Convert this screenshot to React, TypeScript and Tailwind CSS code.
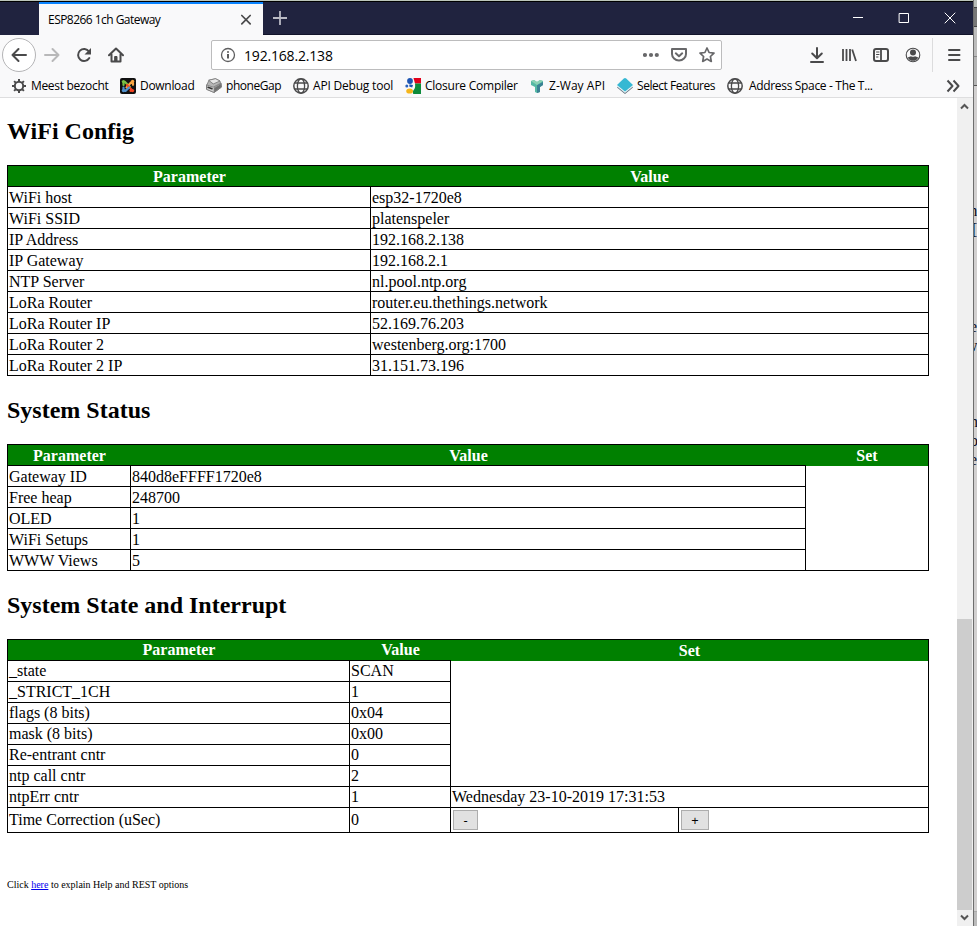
import type { ReactNode } from "react";

type IconProps = { className?: string; children: ReactNode; size?: number };

function Icon({ className = "", children, size = 16 }: IconProps) {
  return (
    <svg
      className={`block shrink-0 ${className}`}
      width={size}
      height={size}
      viewBox={`0 0 ${size} ${size}`}
      fill="none"
      stroke="#4a4a4b"
      strokeWidth="2"
      strokeLinecap="round"
      strokeLinejoin="round"
    >
      {children}
    </svg>
  );
}

function Globe() {
  return (
    <Icon>
      <g strokeWidth="1.5">
        <circle cx="8" cy="8" r="7.2" />
        <ellipse cx="8" cy="8" rx="3.6" ry="7.2" strokeWidth="1.3" />
        <path d="M2.2 5h11.6M2.2 11h11.6" strokeWidth="1.3" />
      </g>
    </Icon>
  );
}

function Gear() {
  return (
    <Icon>
      <circle cx="8" cy="8" r="4.2" strokeWidth="2" />
      <path
        d="M8 1v2.5M8 12.5V15M1 8h2.5M12.5 8H15M3.1 3.1l1.8 1.8M11.1 11.1l1.8 1.8M3.1 12.9l1.8-1.8M11.1 4.9l1.8-1.8"
        strokeWidth="2"
        strokeLinecap="butt"
      />
    </Icon>
  );
}

function Joomla() {
  return (
    <Icon>
      <g stroke="none">
        <rect width="16" height="16" rx="2" fill="#111" />
      </g>
      <path d="M3.5 7V5l1.5-1 5 5" stroke="#7ac143" strokeWidth="2.2" />
      <path d="M6.5 9.5l4.5-5 2 .8v1.5" stroke="#f9a541" strokeWidth="2.2" />
      <path d="M7 7l5 5-1.5.8" stroke="#f44321" strokeWidth="2.2" />
      <path d="M9 9.5L5.5 13l-2-1V9.5" stroke="#5091cd" strokeWidth="2.2" />
      <g stroke="none">
        <circle cx="3.5" cy="3.6" r="1.7" fill="#7ac143" />
        <circle cx="12.6" cy="3.5" r="1.7" fill="#f9a541" />
        <circle cx="12.5" cy="12.6" r="1.7" fill="#f44321" />
        <circle cx="3.5" cy="12.6" r="1.7" fill="#5091cd" />
      </g>
    </Icon>
  );
}

function Box() {
  return (
    <Icon>
      <g stroke="#777" strokeWidth="0.8">
        <path d="M.8 7L3 2.2 9.5.7 14 3l1.3 6-7.2 5.5L1 11.5z" fill="#b5b5b5" />
        <path d="M3 2.2L9.5.7 14 3 7.6 5.8z" fill="#e6e6e6" />
        <path d="M.8 7l6.3 2.2 8-4.2.3 4.2-7.3 5.3L1 11.5z" fill="#d4d4d4" />
        <path d="M8.2 10v4l6.8-4.7V6z" fill="#6f6f6f" />
        <path d="M2 9.3l4 1.5" stroke="#333" strokeWidth="1.5" />
      </g>
    </Icon>
  );
}

function Blocks() {
  return (
    <Icon>
      <g stroke="none">
        <path d="M8.5 0H16v5.5H10z" fill="#e2001a" />
        <path d="M10 5.5h6V16H8.2c-.6-2.5 0-3.6 1.2-5 1-1.500.8-3.500.6-5.500z" fill="#0d8b3b" />
        <circle cx="5" cy="3" r="2.9" fill="#1c54b2" />
        <circle cx="1.8" cy="8" r="1.5" fill="#2b62bd" />
        <path d="M4.500 6.300l3.500.7-.8 2.600-3-1z" fill="#1c54b2" />
        <ellipse cx="4.600" cy="13" rx="3.400" ry="2.600" fill="#f5b51b" />
      </g>
    </Icon>
  );
}

function ZWay() {
  return (
    <Icon>
      <g stroke="none">
        <path d="M2 3l3-1 3 2 3-2 3 1v4l-3 2v5l-3 1-2-1V9L2 7z" fill="#55b9a4" />
        <path d="M8 7l6-3v3l-3 2v5l-3 1z" fill="#3b8194" />
        <path d="M2 3l3-1 3 2 3-2 3 1-6 4z" fill="#8bd2b4" />
      </g>
    </Icon>
  );
}

function Diamond() {
  return (
    <Icon>
      <g stroke="none">
        <path d="M0 9.5L8 16l8-6.5-1-1H1z" fill="#5d6e7c" />
        <path d="M0 8.5L8 15l8-6.5-1-1H1z" fill="#e8f4f7" />
        <path d="M0 7L6.800.6q1.200-1 2.400 0L16 7l-8 6.500z" fill="#36b8d3" />
      </g>
    </Icon>
  );
}

type BookmarkProps = { icon: ReactNode; label: string; box: string; gap?: string };

function Bookmark({ icon, label, box, gap = "gap-1" }: BookmarkProps) {
  return (
    <div className={`flex shrink-0 items-center whitespace-nowrap ${gap} ${box}`}>
      {icon}
      <span>{label}</span>
    </div>
  );
}

function TitleBar() {
  return (
    <div className="flex h-[34px] shrink-0 border-t border-black bg-[#20233f]">
      <div className="ml-[39px] flex w-[224px] items-center border-t-2 border-[#0a84ff] bg-[#f9f9fa] pl-[9px] font-['Open_Sans',sans-serif] text-[12px] text-black">
        <span className="w-[190px] whitespace-nowrap tracking-[-0.54px]">ESP8266 1ch Gateway</span>
        <Icon>
          <path d="M3.800 3.500l8.400 8.400M12.200 3.500l-8.400 8.400" strokeWidth="1.7" />
        </Icon>
      </div>
      <div className="flex flex-1 items-center border-b border-[#11132a]">
        <Icon className="ml-[9px]">
          <path d="M8 1v14M1 8h14" stroke="#b9bac4" strokeWidth="1.8" strokeLinecap="butt" />
        </Icon>
        <div className="ml-auto flex items-center gap-[30px] pr-[15px]">
          <Icon>
            <path d="M3 7.5h10" stroke="#fff" strokeWidth="1" strokeLinecap="butt" />
          </Icon>
          <Icon>
            <rect x="3.5" y="3.5" width="9" height="9" stroke="#fff" strokeWidth="1" />
          </Icon>
          <Icon>
            <path d="M3 3l10 10M13 3L3 13" stroke="#fff" strokeWidth="1" />
          </Icon>
        </div>
      </div>
    </div>
  );
}

function NavBar() {
  return (
    <div className="flex h-10 shrink-0 items-center bg-[#f9f9fa]">
      <div className="ml-[2px] flex size-[34px] shrink-0 items-center justify-center rounded-full border border-[#b4b4b6] bg-white">
        <Icon>
          <path d="M15 8H1.5M7.5 2L1.5 8l6 6" />
        </Icon>
      </div>
      <Icon className="ml-2">
        <path d="M1 8h13.5M8.5 2l6 6-6 6" stroke="#b8b8b9" />
      </Icon>
      <Icon className="ml-4">
        <path d="M13 4.500A6 6 0 1 0 13.300 11" />
        <path d="M15 1v6.500H8.500z" fill="#4a4a4b" stroke="none" />
      </Icon>
      <Icon className="ml-4">
        <path d="M1 8.2L8 1.5l7 6.7M3.5 7.5v7h9v-7" />
        <path d="M7 9.500h2v5H7z" fill="#4a4a4b" strokeWidth="1" />
      </Icon>
      <div className="ml-[87px] flex h-[30px] w-[511px] shrink-0 items-center rounded-[2px] border border-[#bcbcbd] bg-white pl-2">
        <Icon>
          <circle cx="8" cy="8" r="6.5" strokeWidth="1.3" stroke="#5f5f60" />
          <path d="M8 7v4.500M8 4.200v1.600" strokeWidth="1.8" strokeLinecap="butt" />
        </Icon>
        <span className="ml-2 w-[391px] whitespace-nowrap font-['Open_Sans',sans-serif] text-[14px] tracking-[-0.18px] text-black">
          192.168.2.138
        </span>
        <Icon className="ml-2">
          <g fill="#68686a" stroke="none">
            <circle cx="2" cy="8" r="2.1" />
            <circle cx="8" cy="8" r="2.1" />
            <circle cx="13.800" cy="8" r="2.1" />
          </g>
        </Icon>
        <Icon className="ml-3">
          <path d="M1 2h14v5a7 6.5 0 0 1-14 0z" stroke="#68686a" />
          <path d="M4.8 6.3L8 9.2l3.2-2.9" stroke="#68686a" />
        </Icon>
        <Icon className="ml-3">
          <path
            d="M8 1l2.1 4.5 4.9.6-3.6 3.4.9 4.9L8 12l-4.3 2.4.9-4.9L1 6.1l4.9-.6z"
            stroke="#68686a"
            strokeWidth="1.7"
          />
        </Icon>
      </div>
      <div className="ml-[87px] flex shrink-0 items-center gap-4">
        <Icon>
          <path d="M8 1v10M3.2 6.5L8 11.2l4.8-4.7M2 15h12" />
        </Icon>
        <Icon>
          <path d="M2 2v12M5.5 2v12M9 2v12M11.2 2.5L15 14" strokeWidth="1.8" strokeLinecap="butt" />
        </Icon>
        <Icon>
          <rect x="1" y="2" width="14" height="12" rx="2" />
          <path d="M8 2v12" strokeWidth="1.8" />
          <path d="M3.5 5h2.5M3.5 7.5h2.5M3.5 10H5" strokeWidth="1" />
        </Icon>
        <Icon>
          <circle cx="8" cy="8" r="6.8" strokeWidth="1.1" />
          <g fill="#4a4a4b" stroke="none">
            <circle cx="8" cy="5.6" r="3" />
            <path d="M2.8 10.4q2-.7 3.2-1.2 2 1.2 4 0 1.2.5 3.2 1.2A5.7 5.7 0 0 1 2.8 10.4z" />
          </g>
        </Icon>
      </div>
      <div className="ml-[11px] h-[34px] w-px shrink-0 bg-[#dcdcdd]" />
      <Icon className="ml-[13px]">
        <path d="M3 3h10.5M3 8h10.5M3 13h10.5" />
      </Icon>
    </div>
  );
}

function BookmarksBar() {
  return (
    <div className="flex h-[23px] shrink-0 items-center border-b border-[#dededf] bg-[#f9f9fa] pl-[11px] font-['Open_Sans',sans-serif] text-[12px] text-black">
      <Bookmark icon={<Gear />} label="Meest bezocht" box="w-[109px] tracking-[-0.33px]" />
      <Bookmark icon={<Joomla />} label="Download" box="w-[86px] tracking-[-0.3px]" />
      <Bookmark icon={<Box />} label="phoneGap" box="w-[87px] tracking-[-0.45px]" />
      <Bookmark icon={<Globe />} label="API Debug tool" box="w-[112px] tracking-[-0.2px]" />
      <Bookmark icon={<Blocks />} label="Closure Compiler" box="w-[124px] tracking-[-0.24px]" />
      <Bookmark icon={<ZWay />} label="Z-Way API" box="w-[88px] tracking-[0.03px]" />
      <Bookmark icon={<Diamond />} label="Select Features" box="w-[110px] tracking-[-0.45px]" />
      <Bookmark icon={<Globe />} label="Address Space - The T..." box="w-[218px] tracking-[-0.33px]" gap="gap-[6px]" />
      <Icon>
        <path d="M2.5 2.500l5 5.500-5 5.500M8.500 2.500l5 5.500-5 5.500" strokeLinecap="butt" />
      </Icon>
    </div>
  );
}

const box = "h-[21px] border-r border-b border-black pl-px whitespace-nowrap";
const cell = `${box} leading-[21px]`;
const raisedCell = `${box} leading-[19px]`;
const headBox = "h-[21px] bg-[#008000] text-center font-bold text-white";
const head = `${headBox} leading-[21px]`;
const raisedHead = `${headBox} leading-[19px]`;
const heading = "h-[27px] text-[24px] leading-[27px] font-bold whitespace-nowrap";

const wifi = [
  ["WiFi host", "esp32-1720e8"],
  ["WiFi SSID", "platenspeler"],
  ["IP Address", "192.168.2.138"],
  ["IP Gateway", "192.168.2.1"],
  ["NTP Server", "nl.pool.ntp.org"],
  ["LoRa Router", "router.eu.thethings.network"],
  ["LoRa Router IP", "52.169.76.203"],
  ["LoRa Router 2", "westenberg.org:1700"],
  ["LoRa Router 2 IP", "31.151.73.196"],
];

const status = [
  ["Gateway ID", "840d8eFFFF1720e8"],
  ["Free heap", "248700"],
  ["OLED", "1"],
  ["WiFi Setups", "1"],
  ["WWW Views", "5"],
];

const state = [
  ["_state", "SCAN"],
  ["_STRICT_1CH", "1"],
  ["flags (8 bits)", "0x04"],
  ["mask (8 bits)", "0x00"],
  ["Re-entrant cntr", "0"],
  ["ntp call cntr", "2"],
];

function Rows({ rows, style = cell }: { rows: string[][]; style?: string }) {
  return (
    <>
      {rows.flatMap(([name, value]) => [
        <div key={name} className={style}>
          {name}
        </div>,
        <div key={`${name}-value`} className={style}>
          {value}
        </div>,
      ])}
    </>
  );
}

function WifiTable() {
  return (
    <div className="mt-[20px] grid w-[922px] grid-cols-[363px_558px] border-t border-l border-black">
      <div className={`${head} border-b border-black`}>Parameter</div>
      <div className={`${head} border-r border-b border-black`}>Value</div>
      <Rows rows={wifi} />
    </div>
  );
}

function StatusTable() {
  return (
    <div className="mt-[20px] grid w-[922px] grid-cols-[798px_123px] border-t border-l border-black">
      <div className="grid grid-cols-[123px_675px]">
        <div className={`${head} border-b border-black`}>Parameter</div>
        <div className={`${head} border-b border-black`}>Value</div>
        <Rows rows={status} />
      </div>
      <div className="flex flex-col border-r border-b border-black">
        <div className={head}>Set</div>
      </div>
    </div>
  );
}

const pushButton =
  "flex h-5 items-center justify-center border border-[#adadad] bg-[#e1e1e1] font-['Open_Sans',sans-serif] text-[13px] leading-none text-black";

function StateTable() {
  return (
    <div className="mt-[20px] w-[922px] border-t border-l border-black">
      <div className="grid grid-cols-[443px_478px]">
        <div className="grid grid-cols-[342px_101px]">
          <div className={`${raisedHead} border-b border-black`}>Parameter</div>
          <div className={`${raisedHead} border-b border-black`}>Value</div>
          <Rows rows={state} style={raisedCell} />
        </div>
        <div className="flex flex-col border-r border-b border-black">
          <div className={head}>Set</div>
        </div>
      </div>
      <div className="grid grid-cols-[342px_101px_478px]">
        <div className={raisedCell}>ntpErr cntr</div>
        <div className={raisedCell}>1</div>
        <div className={raisedCell}>Wednesday 23-10-2019 17:31:53</div>
      </div>
      <div className="grid h-[25px] grid-cols-[342px_101px_228px_250px] leading-[24px]">
        <div className="border-r border-b border-black pl-px">Time Correction (uSec)</div>
        <div className="border-r border-b border-black pl-px">0</div>
        <div className="flex items-center border-r border-b border-black pl-[2px]">
          <button className={`${pushButton} w-[25px]`}>-</button>
        </div>
        <div className="flex items-center border-r border-b border-black pl-[2px]">
          <button className={`${pushButton} w-[28px]`}>+</button>
        </div>
      </div>
    </div>
  );
}

function Chevron({ d }: { d: string }) {
  return (
    <div className="flex h-[17px] w-[15px] items-center justify-center">
      <svg width="9" height="7" viewBox="0 0 9 7" fill="none" stroke="#555" strokeWidth="2">
        <path d={d} />
      </svg>
    </div>
  );
}

function ScrollBar() {
  return (
    <div className="flex w-4 shrink-0 flex-col bg-[#f0f0f0]">
      <Chevron d="M1 5.5l3.5-3.5L8 5.5" />
      <div className="mt-[504px] h-[291px] w-[15px] shrink-0 bg-[#cdcdcd]" />
      <Chevron d="M1 1.5L4.5 5 8 1.5" />
    </div>
  );
}

function Page() {
  return (
    <div className="flex min-h-0 flex-1 bg-white">
      <div className="flex-1 pl-[7px] pt-[20px] font-['Liberation_Serif','Times_New_Roman',serif] text-[16px] text-black">
        <h2 className={heading}>WiFi Config</h2>
        <WifiTable />
        <h2 className={`${heading} mt-[21px]`}>System Status</h2>
        <StatusTable />
        <h2 className={`${heading} mt-[21px]`}>System State and Interrupt</h2>
        <StateTable />
        <p className="mt-[45px] text-[10px] leading-[14px]">
          Click{" "}
          <a href="#help" className="text-[#0000ee] underline">
            here
          </a>{" "}
          to explain Help and REST options
        </p>
      </div>
      <ScrollBar />
    </div>
  );
}

function WindowBehind() {
  return (
    <div className="flex w-1 shrink-0 flex-col overflow-hidden border-l border-[#6e6e6e] bg-[#d2d0d0] font-['Liberation_Serif',serif] text-[16px] leading-[19px] text-[#0b0b20]">
      <div className="h-[7px] shrink-0 bg-[#b9bdb9]" />
      <div className="h-[20px] shrink-0 border-y border-[#444] bg-[#777]" />
      <div className="h-[30px] shrink-0 border-b border-[#888] bg-[#bcbcbc]" />
      <div className="h-[29px] shrink-0 border-b border-[#555] bg-[#b5b5b5]" />
      <div className="mt-[115px] flex w-2 shrink-0 flex-col">
        <span className="-ml-[9px]">m</span>
        <span className="-ml-[2px]">[</span>
      </div>
      <div className="mt-[78px] flex w-2 shrink-0 flex-col">
        <span className="-ml-1">e</span>
        <span className="-ml-2">w</span>
      </div>
      <div className="mt-[57px] flex w-2 shrink-0 flex-col">
        <span className="-ml-1">n</span>
        <span className="-ml-1">o</span>
        <span className="-ml-1">e</span>
      </div>
      <div className="mt-auto h-[15px] shrink-0 border-t border-[#aaa] bg-[#bbb]" />
    </div>
  );
}

export default function App() {
  return (
    <div className="flex h-[926px] w-[977px] overflow-hidden bg-white">
      <div className="flex w-[973px] shrink-0 flex-col">
        <div className="h-px shrink-0 bg-[#bcc6bb]" />
        <TitleBar />
        <NavBar />
        <BookmarksBar />
        <Page />
      </div>
      <WindowBehind />
    </div>
  );
}
